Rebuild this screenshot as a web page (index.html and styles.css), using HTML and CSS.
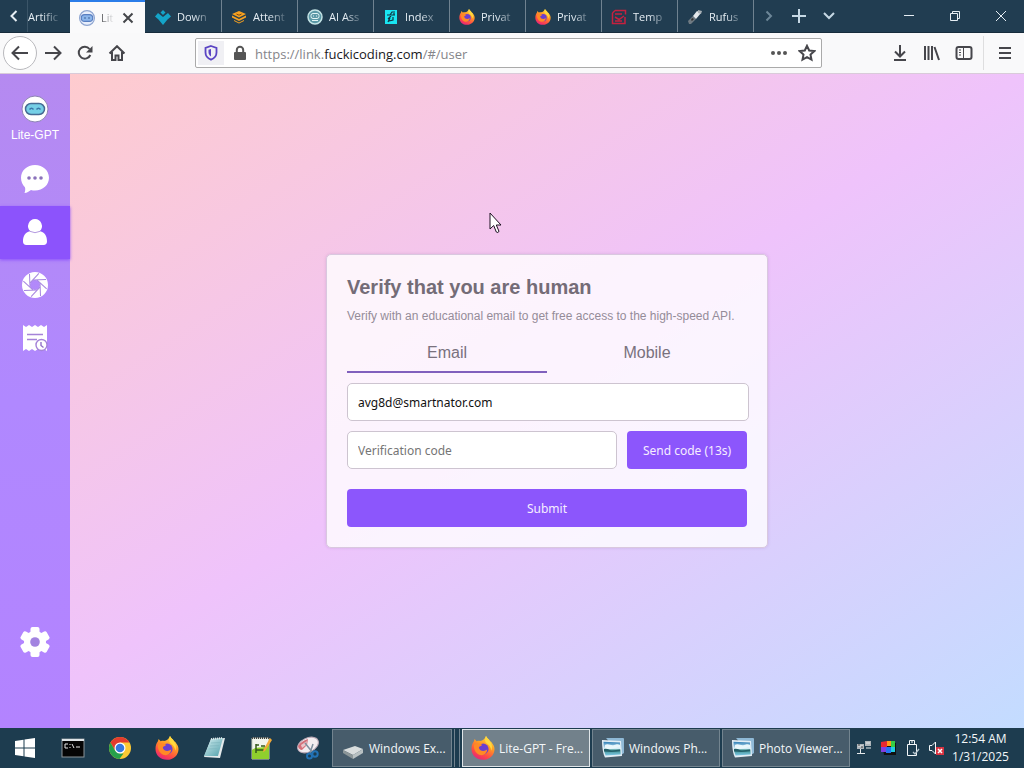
FILE: index.html
```html
<!DOCTYPE html>
<html lang="en">
<head>
<meta charset="utf-8">
<title>Lite-GPT</title>
<link rel="stylesheet" href="styles.css">
</head>
<body>
<svg class="sprite" aria-hidden="true">
  <defs>
    <linearGradient id="fox-body" x1="0.8" y1="0" x2="0.3" y2="1">
      <stop offset="0" stop-color="#ffe14a"/><stop offset="0.4" stop-color="#ff9a24"/><stop offset="0.75" stop-color="#ff4a45"/><stop offset="1" stop-color="#e5247c"/>
    </linearGradient>
    <linearGradient id="photo-sky" x1="0" y1="0" x2="0" y2="1">
      <stop offset="0" stop-color="#2f7fb5"/><stop offset="0.5" stop-color="#d8f1fa"/><stop offset="0.6" stop-color="#3c8f8a"/><stop offset="1" stop-color="#7fc8e8"/>
    </linearGradient>
    <linearGradient id="note" x1="0" y1="0" x2="1" y2="1">
      <stop offset="0" stop-color="#d9f1f3"/><stop offset="1" stop-color="#4e9eaa"/>
    </linearGradient>
    <symbol id="firefox" viewBox="0 0 24 24">
      <path fill="url(#fox-body)" d="M15 0c1 2 3 3.300 4 5.200 1.200.3 2 1.300 2.300 2.300C22.600 9 23.500 11 23.500 13.200 23.500 19 18.500 23.800 12 23.800S.5 19.200.5 13c0-3 .8-5.600 2.300-7.400L3.600 3l2.100 2.300C7 4.800 8 4.700 9 5c1.500-.3 2.600-.6 3.600-1.500C13.700 2.500 14.500 1.400 15 0z"/>
      <circle cx="12.200" cy="13" r="5.400" fill="#6a3fd0"/>
      <path fill="#ff8a25" d="M3 8.500c3-1.200 6-1 8.200.2-1 1.600-3.200 1.300-3.400 3 1.200 3.600 5.200 4.300 8.400 1.800-.4 4.500-4.200 6.700-8 5.200C4.500 17.200 2.500 13 3 8.500z"/>
      <path fill="#ffd83e" d="M15 0c1 2 3 3.300 4 5.200 2 2.500 2.600 6 1.400 9.600-.5-3.600-2.300-5.800-4.600-7.300C13.400 5.800 13.800 2.500 15 0z"/>
    </symbol>
    <symbol id="photo" viewBox="0 0 24 22">
      <path fill="#8fb9d6" d="M5 1h17a1 1 0 0 1 1 1v14l-3 2z"/>
      <path fill="#e3eef5" d="M1 3l19 1 1 15-17 1.500C2 17 1 10 1 3z"/>
      <path fill="url(#photo-sky)" d="M2.500 4.800L19 5.500l.7 12L4.500 18.500C3 14 2.500 10 2.500 4.800z"/>
      <path fill="#e9f7fb" d="M4 8c3-2 6 1 9 0s4-1 6 0v3c-5-1-9 2-15 1z"/>
      <path fill="#24606a" d="M3 12c4-1 5 1.500 8 1.500s5-1 8-1v1.800c-5 .7-10 1-16 .2z"/>
    </symbol>
    <symbol id="robot" viewBox="0 0 28 28">
      <circle cx="14" cy="14" r="13" fill="#fff" stroke="#8d83b4"/>
      <rect x="4.500" y="8.500" width="19" height="11" rx="5.500" fill="#75cfe6" stroke="#466b94" stroke-width="1.500"/>
      <path d="M8.500 14.500q2-2.500 4 0m3 0q2-2.500 4 0" fill="none" stroke="#3977a8" stroke-width="1.500"/>
    </symbol>
  </defs>
</svg>

<header class="tabbar">
  <button class="scroll-btn" aria-label="Scroll tabs left"><svg width="10" height="14" viewBox="0 0 10 14"><path d="M7.500 2L2.500 7l5 5" class="line"/></svg></button>
  <div class="tab partial"><span class="tab-title">Artific</span></div>
  <div class="tab active">
    <svg width="16" height="16" viewBox="0 0 28 28"><circle cx="14" cy="14" r="13" fill="#e8eefb" stroke="#8da4d0" stroke-width="2"/><rect x="4" y="8" width="20" height="12" rx="6" fill="#8bb5ea" stroke="#587ec0" stroke-width="2"/><path d="M9 14h3m4 0h3" stroke="#31578f" stroke-width="2"/></svg>
    <span class="tab-title">Lit</span>
    <button class="tab-close" aria-label="Close tab"><svg width="12" height="12" viewBox="0 0 12 12"><path d="M1.500 1.500l9 9m0-9l-9 9" class="line"/></svg></button>
  </div>
  <div class="tab first"><svg width="16" height="16" viewBox="0 0 16 16"><path fill="#14a4c8" d="M8 1l2.500 2.500L8 6 5.500 3.500zM3 4l5 4 5-4 3 3.500-3.500 3L8 16l-4.500-5.500L0 7.500z"/></svg><span class="tab-title">Down</span></div>
  <div class="tab"><svg width="16" height="16" viewBox="0 0 16 16"><path fill="#f5a020" d="M8 2l7 3-7 3.500L1 5zM1 6.500l7 3.500 7-3.500v2L8 12 1 8.500zM3 11l5 2.500 5-2.500v1l-5 2.500L3 12z"/><path d="M5.500 5L8 6.200 10.500 5" fill="none" stroke="#7c4b13"/></svg><span class="tab-title">Attent</span></div>
  <div class="tab"><svg width="16" height="16" viewBox="0 0 16 16"><circle cx="8" cy="8" r="7" fill="#5b98a6" stroke="#c4e3e5" stroke-width="1.500"/><rect x="4" y="4.500" width="8" height="5" rx="2" fill="none" stroke="#e2f5f5"/><path d="M6 7h1m2 0h1M5 11.500h6" stroke="#e2f5f5"/></svg><span class="tab-title">AI Ass</span></div>
  <div class="tab"><svg width="16" height="16" viewBox="0 0 16 16"><path fill="#19e5f2" d="M2 1h12v14H2z"/><path d="M12 3H9L7 6H4m4 0h4M8 7l-3 3m5-2v3l-4 1m1-3l-2 4m6-9v2" fill="none" stroke="#12303f" stroke-width="1.200"/></svg><span class="tab-title">Index</span></div>
  <div class="tab"><svg width="16" height="16"><use href="#firefox"/></svg><span class="tab-title">Privat</span></div>
  <div class="tab"><svg width="16" height="16"><use href="#firefox"/></svg><span class="tab-title">Privat</span></div>
  <div class="tab"><svg width="16" height="16" viewBox="0 0 16 16"><path d="M4 1.500h10.500v4M1.500 4v10.500h12.500V8M1.500 4L4 1.500M4 5h7M4 8l4 2.500L13 7M4 12h7" fill="none" stroke="#c6203f" stroke-width="1.500"/></svg><span class="tab-title">Temp</span></div>
  <div class="tab"><svg width="16" height="16" viewBox="0 0 16 16"><path fill="#6f7a82" d="M1 12l5-5 3 3-5 5H2z"/><path fill="#e5e9ec" d="M6 7l4-5 4 2-5 6z"/><path fill="#a8b0b6" d="M11 1l4 1-1 3-3-1z"/><path fill="#333" d="M5 9l2 1-2 2-1-1z"/></svg><span class="tab-title">Rufus</span></div>
  <div class="tab-tools">
    <button class="dim" aria-label="Scroll tabs right"><svg width="10" height="14" viewBox="0 0 10 14"><path d="M2.500 2.500L7 7l-4.500 4.500" class="line"/></svg></button>
    <button aria-label="New tab"><svg width="16" height="16" viewBox="0 0 16 16"><path d="M8 1v14M1 8h14" class="line"/></svg></button>
    <button aria-label="List all tabs"><svg width="14" height="10" viewBox="0 0 14 10"><path d="M2 2l5 5 5-5" class="line"/></svg></button>
  </div>
  <div class="window-controls">
    <button aria-label="Minimize"><svg width="12" height="12" viewBox="0 0 12 12"><path d="M1 5.500h10" class="thin"/></svg></button>
    <button aria-label="Restore"><svg width="12" height="12" viewBox="0 0 12 12"><path d="M1.500 3.500h7v7h-7zM3.500 3.500v-2h7v7h-2" class="thin"/></svg></button>
    <button aria-label="Close"><svg width="12" height="12" viewBox="0 0 12 12"><path d="M1 1l10 10m0-10L1 11" class="thin"/></svg></button>
  </div>
</header>

<nav class="toolbar" aria-label="Browser toolbar">
  <div class="nav-group">
    <button class="back" aria-label="Back"><svg width="18" height="16" viewBox="0 0 18 16"><path d="M17 8H2m6-6.500L1.500 8 8 14.500" class="line"/></svg></button>
    <button aria-label="Forward"><svg width="18" height="16" viewBox="0 0 18 16"><path d="M1 8h15M10 1.500L16.500 8 10 14.500" class="line"/></svg></button>
    <button aria-label="Reload"><svg width="16" height="16" viewBox="0 0 16 16"><path d="M13.300 10A6 6 0 1 1 12.500 4" class="line"/><path d="M15.500 1v6.500H9z" fill="currentColor"/></svg></button>
    <button aria-label="Home"><svg width="18" height="16" viewBox="0 0 18 16"><path d="M1.500 8.500L9 1.200l7.500 7.300M4 7v8h3.500v-4.500h3V15H14V7" class="line"/></svg></button>
  </div>
  <div class="urlbar">
    <button class="shield" aria-label="Tracking protection"><svg width="14" height="16" viewBox="0 0 14 16"><path d="M7 1l5.500 1.800v4.700c0 3.500-2.500 6-5.500 7.200-3-1.200-5.500-3.700-5.500-7.200V2.800z" fill="none" stroke="#5b45c4" stroke-width="1.800"/><path d="M7 4v7.500C5 10 4.500 8.500 4.500 7V4.800z" fill="#5b45c4"/></svg></button>
    <button class="lock" aria-label="Site information"><svg width="14" height="16" viewBox="0 0 14 16"><path d="M3.800 8V5a3.200 3.200 0 0 1 6.400 0v3" fill="none" stroke="#555" stroke-width="2"/><rect x="1" y="7" width="12" height="8" rx="1" fill="#555"/></svg></button>
    <div class="url">https://link.<span>fuckicoding.com</span>/#/user</div>
    <button aria-label="Page actions"><svg width="18" height="6" viewBox="0 0 18 6"><circle cx="3" cy="3" r="2"/><circle cx="9" cy="3" r="2"/><circle cx="15" cy="3" r="2"/></svg></button>
    <button aria-label="Bookmark"><svg width="18" height="18" viewBox="0 0 18 18"><path d="M9 1.800l2.200 4.700 5.100.6-3.800 3.500 1 5.100L9 13.200l-4.500 2.500 1-5.100L1.700 7.100l5.100-.6z" class="line"/></svg></button>
  </div>
  <div class="right-group">
    <button aria-label="Downloads"><svg width="16" height="18" viewBox="0 0 16 18"><path d="M8 1v11M3 7.500l5 5 5-5M2 16h12" class="line"/></svg></button>
    <button aria-label="Library"><svg width="18" height="16" viewBox="0 0 18 16"><path d="M2 1v14M5.500 1v14M9 1v14M11.500 2l4.500 13" class="line"/></svg></button>
    <button aria-label="Sidebars"><svg width="18" height="16" viewBox="0 0 18 16"><rect x="1.500" y="2" width="15" height="12" rx="2" class="line"/><path d="M8.500 2v12M4 5h2M4 7.500h2M4 10h2" class="thin"/></svg></button>
  </div>
  <button class="menu" aria-label="Menu"><svg width="14" height="14" viewBox="0 0 14 14"><path d="M1 2h12M1 7h12M1 12h12" class="line"/></svg></button>
</nav>

<div class="app">
  <aside class="sidebar">
    <a class="brand" href="#/"><svg width="28" height="28"><use href="#robot"/></svg><span>Lite-GPT</span></a>
    <a class="side-item" href="#/chat" aria-label="Chat"><svg width="30" height="30" viewBox="0 0 30 30"><path fill="#fff" d="M15 1c8 0 14 5.600 14 12.800S23 26.500 15 26.500c-1.500 0-2.800-.2-4-.6C9 27.500 7 28.700 4.500 29c.8-2 1-4 .4-5.700C2.500 21 1 17.700 1 13.800 1 6.600 7 1 15 1z"/><g fill="#8b72bb"><circle cx="9" cy="14" r="1.800"/><circle cx="15" cy="14" r="1.800"/><circle cx="21" cy="14" r="1.800"/></g></svg></a>
    <a class="side-item current" href="#/user" aria-label="User"><svg width="26" height="28" viewBox="0 0 26 28"><g fill="#fff"><path d="M13 1a7 7 0 0 1 4.800 12C23 14.500 25 18 25 23.500c0 2-1.300 3.500-3.300 3.500H4.300C2.300 27 1 25.500 1 23.500 1 18 3 14.500 8.200 13A7 7 0 0 1 13 1z"/></g><path d="M7.500 13.200q5.500 3 11 0" fill="none" stroke="#b49ae0"/></svg></a>
    <a class="side-item" href="#/images" aria-label="Images"><svg width="28" height="28" viewBox="0 0 28 28"><circle cx="14" cy="14" r="9" fill="none" stroke="#fff" stroke-width="8"/><g stroke="#a584e0" stroke-width="1"><path id="blade" d="M12 9L25 8.500"/><use href="#blade" transform="rotate(45 14 14)"/><use href="#blade" transform="rotate(90 14 14)"/><use href="#blade" transform="rotate(135 14 14)"/><use href="#blade" transform="rotate(180 14 14)"/><use href="#blade" transform="rotate(225 14 14)"/><use href="#blade" transform="rotate(270 14 14)"/><use href="#blade" transform="rotate(315 14 14)"/></g></svg></a>
    <a class="side-item" href="#/orders" aria-label="Orders"><svg width="28" height="28" viewBox="0 0 28 28"><path fill="#fff" d="M2 1l3 2 3-2 3 2 3-2 3 2 3-2 3 2 3-2v26l-3-2-3 2-3-2-3 2-3-2-3 2-3-2-3 2z"/><path d="M6 10.500h16M6 15.500h10" stroke="#a583d8" stroke-width="1.600"/><circle cx="20.500" cy="21" r="5.500" fill="#fff" stroke="#a583d8" stroke-width="1.400"/><path d="M20 18v3.500l2.500 2" fill="none" stroke="#9272c8" stroke-width="1.400"/></svg></a>
    <a class="side-item settings" href="#/settings" aria-label="Settings"><svg width="30" height="30" viewBox="0 0 30 30"><g fill="#fff"><circle cx="15" cy="15" r="11"/><rect id="tooth" x="10.500" y="0" width="9" height="30" rx="2"/><use href="#tooth" transform="rotate(60 15 15)"/><use href="#tooth" transform="rotate(120 15 15)"/></g><circle cx="15" cy="15" r="4.800" fill="#a283e0"/></svg></a>
  </aside>
  <main class="content">
    <form class="card">
      <h1>Verify that you are human</h1>
      <p>Verify with an educational email to get free access to the high-speed API.</p>
      <div class="method-tabs" role="tablist">
        <button type="button" role="tab" aria-selected="true" class="selected">Email</button>
        <button type="button" role="tab" aria-selected="false">Mobile</button>
      </div>
      <input class="field email" type="email" aria-label="Email" value="avg8d@smartnator.com">
      <div class="code-row">
        <input class="field" type="text" aria-label="Verification code" placeholder="Verification code">
        <button type="button" class="primary">Send code (13s)</button>
      </div>
      <button type="submit" class="primary submit">Submit</button>
    </form>
  </main>
</div>

<footer class="taskbar">
  <button class="start" aria-label="Start"><svg width="22" height="22" viewBox="0 0 22 22"><path fill="#fff" d="M1 4l8.500-1.200v7.700H1zM10.500 2.600L21 1v9.500H10.500zM1 11.500h8.500v7.700L1 18zM10.500 11.500H21V21l-10.500-1.600z"/></svg></button>
  <button class="pin" aria-label="Command Prompt"><svg width="24" height="20" viewBox="0 0 24 20"><rect x="1" y="1" width="22" height="18" fill="#050505" stroke="#8c9499"/><path d="M1 2h22" stroke="#dfe4e6" stroke-width="2"/><path d="M7 6H4v4h3M9 6v1m0 2v1m2-4l2 4m2-1h4" fill="none" stroke="#e8e8e8"/></svg></button>
  <button class="pin" aria-label="Chrome"><svg width="24" height="24" viewBox="0 0 24 24"><circle cx="12" cy="12" r="11" fill="#fcc934"/><path fill="#e33b2e" d="M2.500 6.500A11 11 0 0 1 21.500 6.500H12L7.200 14.700z"/><path fill="#26a04b" d="M2.500 6.500l4.700 8.200L12 17.500h3.500L11.500 23A11 11 0 0 1 2.500 6.500z"/><circle cx="12" cy="12" r="5.500" fill="#fff"/><circle cx="12" cy="12" r="4.300" fill="#3678e0"/></svg></button>
  <button class="pin" aria-label="Firefox"><svg width="24" height="24"><use href="#firefox"/></svg></button>
  <button class="pin" aria-label="Notepad"><svg width="24" height="24" viewBox="0 0 24 24"><path fill="#e4eaec" d="M2 21L9 3l14-1-5 20z"/><path fill="url(#note)" d="M2 20L9 3l12-1-5 18z"/><path d="M9 3l12-1" stroke="#dce7ea" stroke-width="2" stroke-dasharray="1 1"/><path d="M9 7l9-.5M8 10l9-.5M6.500 13l9-.5" stroke="#7fb6bf" stroke-width=".7"/></svg></button>
  <button class="pin" aria-label="Notepad++"><svg width="24" height="26" viewBox="0 0 24 26"><path fill="#f1f4ec" stroke="#c8cdbd" d="M3 3h17v21H3z"/><path fill="#8fd02d" d="M3 15c4-4 10-1 17-5v14H3z"/><path d="M3 3h17" stroke="#444" stroke-width="2" stroke-dasharray="1 1"/><path d="M7 9v9m0-8h3m2 1h4M7 15h9" stroke="#34591b" stroke-width="1.500"/><path fill="#f2a938" d="M21 3l2 2-7 11-2 1 .5-2.500z"/></svg></button>
  <button class="pin" aria-label="Snipping Tool"><svg width="24" height="24" viewBox="0 0 24 24"><ellipse cx="12" cy="9" rx="11" ry="7" transform="rotate(-25 12 9)" fill="#f3edf0" stroke="#b9a7b4"/><path fill="#d4707a" d="M2 10c3-4 6-6 10-7l-1 6-5 5c-2 0-4-2-4-4z"/><path fill="#e9c8cc" d="M5 9l6-4-1 4-4 3z"/><path d="M9 7l8 10m0-9l-3 9" stroke="#7f8f9e" stroke-width="1.500"/><circle cx="19" cy="18" r="2.700" fill="none" stroke="#2272b5" stroke-width="2"/><circle cx="13.500" cy="20" r="2.500" fill="none" stroke="#2272b5" stroke-width="2"/></svg></button>
  <div class="windows">
    <div class="stack"><button class="window"><svg width="24" height="24" viewBox="0 0 24 24"><path fill="#d9dddd" d="M2 14l12-4 8 3-10 6z"/><path fill="#8c9698" d="M2 14l10 5v4L2 17z"/><path fill="#b9c1c2" d="M12 19l10-6v4l-10 6z"/></svg><span>Windows Ex...</span></button></div>
    <button class="window focused"><svg width="24" height="24"><use href="#firefox"/></svg><span>Lite-GPT - Fre...</span></button>
    <button class="window"><svg width="24" height="22"><use href="#photo"/></svg><span>Windows Ph...</span></button>
    <button class="window"><svg width="24" height="22"><use href="#photo"/></svg><span>Photo Viewer...</span></button>
  </div>
  <div class="tray">
    <svg width="16" height="16" viewBox="0 0 16 16"><path fill="#aeb5ba" d="M1 4h7v5H1zM9 1h6v5H9z"/><path d="M2 6h5M10 3h4M10 8h5M4.500 9v4M1 13.500h8" stroke="#e5e9eb"/><path d="M2 5h2m1 2h2" stroke="#444"/></svg>
    <svg width="16" height="16" viewBox="0 0 16 16"><path fill="#111" d="M2 3h14v12H4z"/><path fill="#e92931" d="M1 2l6-1v6H1z"/><path fill="#ff9c16" d="M7 1h4v5H7z"/><path fill="#36cc46" d="M11 1h4v6h-4z"/><path fill="#823ee0" d="M1 7h5v5H1z"/><path fill="#2573f2" d="M6 7h5v6H6z"/><path fill="#20cce2" d="M11 7h4v5h-4z"/></svg>
    <svg width="16" height="18" viewBox="0 0 16 18"><path d="M5.500 5V1.500h5V5M3.500 5.500h9v11h-9zM7 3h2" class="thin"/><path d="M9 13l2 2 4-5" fill="none" stroke="#b8c7cf" stroke-width="1.300"/></svg>
    <svg width="18" height="16" viewBox="0 0 18 16"><path d="M1.500 5.500H4L7.500 2v12L4 10.500H1.500z" class="thin"/><path fill="#d83341" d="M8 7h8v8H8z"/><path d="M10 9l4 4m0-4l-4 4" stroke="#fff" stroke-width="1.500"/></svg>
  </div>
  <div class="clock"><span>12:54 AM</span><span>1/31/2025</span></div>
</footer>

<svg class="pointer" width="14" height="22" viewBox="0 0 14 22" aria-hidden="true"><path d="M1 1v16l3.700-3.500L7.300 20c1 1 2.600.4 2.600-.9L7.300 13H12z" fill="#fff" stroke="#1c1020"/></svg>
</body>
</html>
```
FILE: styles.css
```css
* { box-sizing: border-box; }

body {
  display: flex;
  flex-direction: column;
  min-height: 100vh;
  margin: 0;
  font-family: "Open Sans", "Noto Sans", sans-serif;
  font-size: 12px;
  background: #fff;
}

button {
  display: flex;
  align-items: center;
  justify-content: center;
  flex: none;
  margin: 0;
  padding: 0;
  border: 0;
  background: none;
  color: inherit;
  font: inherit;
}

svg { flex: none; display: block; }
.line { fill: none; stroke: currentColor; stroke-width: 2; }
.thin { fill: none; stroke: currentColor; stroke-width: 1; }
.sprite { position: absolute; width: 0; height: 0; }
.pointer { position: absolute; left: 489px; top: 212px; }

/* Browser tabs */
.tabbar {
  display: flex;
  height: 33px;
  background: #213d51;
  border-bottom: 1px solid #172c3c;
  color: #e6eef4;
}
.scroll-btn { width: 27px; }
.tab {
  display: flex;
  align-items: center;
  flex: 0 1 76px;
  min-width: 0;
  gap: 6px;
  padding: 2px 4px 0 9px;
  border-left: 1px solid #6f8290;
}
.tab.first { border-left-color: transparent; }
.tab-title {
  flex: 1;
  min-width: 0;
  white-space: nowrap;
  font-size: 11px;
  line-height: 20px;
  -webkit-mask-image: linear-gradient(to left, transparent 4px, #000 24px);
  mask-image: linear-gradient(to left, transparent 4px, #000 24px);
}
.tab.partial { flex-basis: 43px; padding: 2px 4px 0 0; border-left-color: #3b5568; }
.tab.active {
  flex-basis: 75px;
  height: 33px;
  padding: 0 11px 0 9px;
  background: #fafafb;
  border-left: 0;
  border-top: 2px solid #2b7de9;
  color: #44464a;
}
.tab.active .tab-title {
  -webkit-mask-image: linear-gradient(to left, transparent 2px, #000 16px);
  mask-image: linear-gradient(to left, transparent 2px, #000 16px);
}
.tab-tools { display: flex; border-left: 1px solid #6f8290; }
.tab-tools button { width: 30px; color: #c6d8e4; }
.tab-tools .dim { color: #6d8798; }
.window-controls { display: flex; margin-left: auto; }
.window-controls button { width: 46px; }

/* Browser toolbar */
.toolbar {
  display: flex;
  align-items: center;
  height: 41px;
  padding: 0 3px;
  background: #f9f9fa;
  border-bottom: 1px solid #d9cbd9;
  color: #46464b;
}
.nav-group { display: flex; width: 192px; align-items: center; }
.nav-group button { width: 32px; height: 32px; }
.nav-group .back { width: 34px; height: 34px; border: 1px solid #b9b9bd; border-radius: 50%; background: #fff; }
.urlbar {
  display: flex;
  align-items: center;
  flex: 1;
  height: 30px;
  max-width: 627px;
  padding: 2px 0 2px 2px;
  border: 1px solid #aaa;
  border-radius: 2px;
  background: #fff;
  fill: #555;
}
.shield { width: 26px; height: 24px; background: #f0f0f4; }
.lock { width: 31px; }
.url { flex: 1; min-width: 0; padding-top: 2px; font-size: 13px; line-height: 20px; color: #85858a; white-space: nowrap; }
.url span { color: #18181b; }
.urlbar > button:nth-last-child(-n+2) { width: 28px; }
.right-group { display: flex; margin-left: auto; padding-right: 3px; border-right: 1px solid #dededf; }
.right-group button { width: 32px; height: 34px; }
.menu { width: 32px; margin-left: 5px; }

/* Application */
.app {
  display: flex;
  flex: 1;
  background: linear-gradient(to bottom right, #ffcccb, #efc3fb 50%, #c3dcff);
}
.sidebar {
  display: flex;
  flex-direction: column;
  width: 70px;
  flex: none;
  padding: 21px 0 59px;
  background: linear-gradient(#b58af0, #b088ff 50%, #b383ff);
}
.brand {
  display: flex;
  flex-direction: column;
  align-items: center;
  gap: 4px;
  height: 58px;
  color: #fff;
  font: 12px/16px "Liberation Sans", Arial, sans-serif;
  text-decoration: none;
}
.side-item { display: flex; align-items: center; justify-content: center; height: 53px; padding-bottom: 2px; }
.side-item.current { background: #8c53fc; box-shadow: 0 1px 3px #8c53fc; }
.settings { margin-top: auto; }
.content { display: flex; flex: 1; align-items: center; justify-content: center; }

.card {
  width: 442px;
  padding: 20px;
  border: 1px solid #d9c8df;
  border-radius: 5px;
  background: rgba(255, 255, 255, .8);
  color: #79717d;
  font-family: "Liberation Sans", Arial, sans-serif;
  box-shadow: 0 0 3px rgba(130, 90, 150, .25);
}
.card h1 { margin: 0 0 9px; font-size: 20px; line-height: 24px; color: #746c77; }
.card p { margin: 0 0 8px; font-size: 12px; line-height: 17px; color: #958c99; white-space: nowrap; }
.method-tabs { display: flex; margin-bottom: 10px; }
.method-tabs button { flex: 1; height: 40px; padding-top: 2px; border-bottom: 2px solid transparent; font-size: 16px; }
.method-tabs .selected { border-bottom-color: #8060bd; }
.field {
  display: block;
  flex: 1;
  min-width: 0;
  height: 38px;
  padding: 0 10px;
  border: 1px solid #cdc4d0;
  border-radius: 5px;
  background: #fff;
  color: #111;
  font: 12px "Noto Sans", "Open Sans", sans-serif;
}
.field::placeholder { color: #757575; opacity: 1; }
.email { width: calc(100% + 2px); margin-bottom: 10px; }
.code-row { display: flex; gap: 10px; margin-bottom: 20px; }
.primary {
  width: 120px;
  height: 38px;
  border-radius: 4px;
  background: #8c56fc;
  color: #f6edff;
  font: 12px "Noto Sans", "Open Sans", sans-serif;
}
.submit { width: 100%; }

/* Desktop taskbar */
.taskbar { display: flex; height: 40px; background: #1d3c4f; color: #f3f7f9; }
.start { width: 49px; }
.pin { width: 47px; }
.windows { display: flex; gap: 2px; padding: 1px 0; margin-left: 1px; }
.window {
  width: 128px;
  height: 38px;
  gap: 4px;
  padding: 0 8px;
  justify-content: flex-start;
  border: 1px solid #73848f;
  background: #475c6b;
  white-space: nowrap;
}
.window.focused { border-color: #dfe5e8; background: #72818b; }
.stack { display: flex; width: 128px; padding-right: 4px; border-right: 1px solid #71828e; }
.stack .window { width: 120px; box-shadow: 2px 0 #1d3c4f, 3px 0 #71828e; }
.tray { display: flex; align-items: center; gap: 8px; margin-left: auto; }
.clock {
  display: flex;
  flex-direction: column;
  justify-content: center;
  width: 78px;
  padding-right: 9px;
  text-align: center;
  line-height: 18px;
}
```
